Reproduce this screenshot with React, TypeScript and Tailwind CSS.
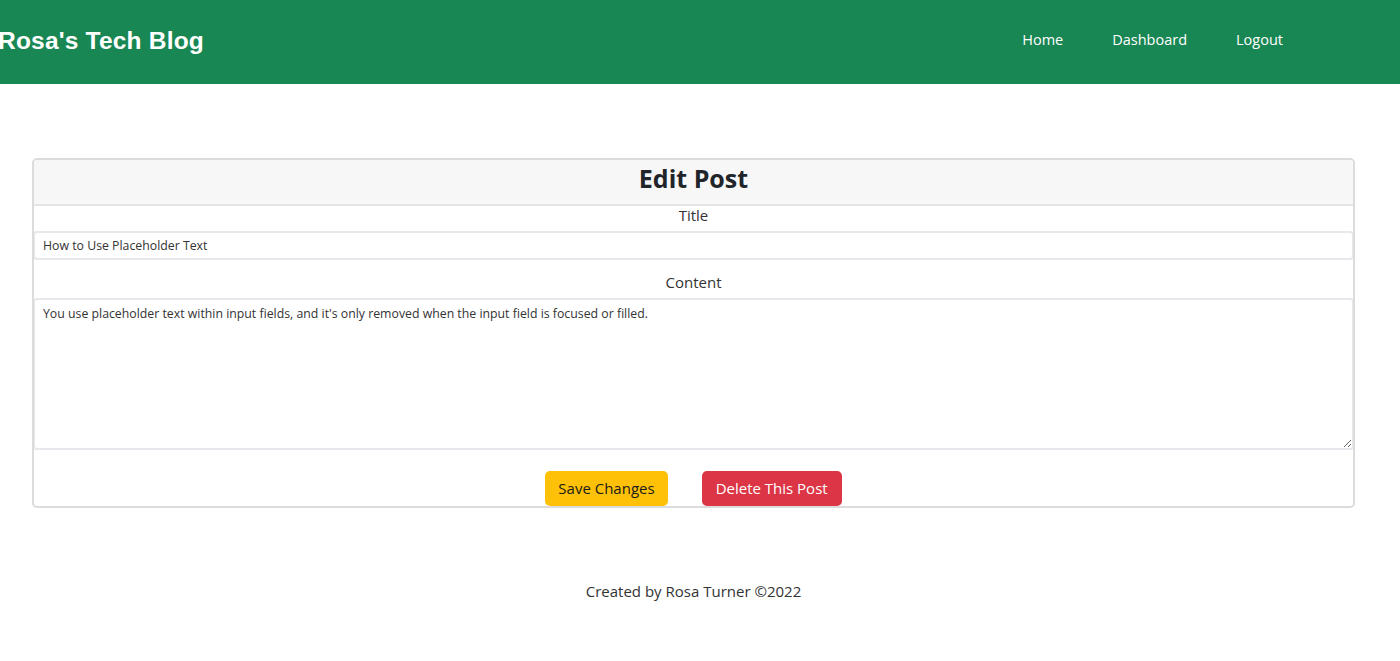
import React from "react";

const body = "font-['Open_Sans',_'DejaVu_Sans',_sans-serif]";

export default function App() {
  return (
    <div className={`min-h-screen w-[1400px] bg-white text-[#212529] ${body}`}>
      <header className="h-[84px] bg-[#198754] flex items-center w-full">
        <h1 className="font-['Liberation_Sans',_sans-serif] font-bold text-[24.5px] text-white -ml-[2px] -mt-[2px] tracking-[0.2px]">
          Rosa's Tech Blog
        </h1>
        <nav className="ml-auto mr-[117px] flex items-center gap-[49px] text-white text-[14.5px] -mt-[5px]">
          <a>Home</a>
          <a>Dashboard</a>
          <a>Logout</a>
        </nav>
      </header>

      <main className="w-[1387px] pt-[74px] px-[32px]">
        <div className="border-2 border-[#dcdcdc] rounded-[5px] overflow-hidden">
          <div className="bg-[#f7f7f7] h-[46px] flex items-center justify-center border-b-2 border-[#e5e5e5]">
            <h2 className="text-[25px] font-bold text-[#212529] -mt-[6px]">Edit Post</h2>
          </div>
          <form className="flex flex-col">
            <label className="text-center text-[15px] text-[#333] leading-[20px] -mt-[1px] h-[26px]">Title</label>
            <input
              defaultValue="How to Use Placeholder Text"
              className="h-[29px] -mx-[1px] border-2 border-[#e8e8ec] rounded-[4px] px-[8px] text-[12.3px] text-[#333] outline-none"
            />
            <label className="text-center text-[15px] text-[#333] leading-[20px] pt-[12px] h-[38px]">Content</label>
            <textarea
              defaultValue="You use placeholder text within input fields, and it's only removed when the input field is focused or filled."
              className="h-[152px] -mx-[1px] border-2 border-[#e8e8ec] rounded-[4px] px-[8px] pt-[5px] text-[12.3px] text-[#333] outline-none resize-y"
            />
            <div className="flex justify-center gap-[34px] pt-[21px]">
              <button type="button" className="h-[35px] px-[13px] rounded-[5px] bg-[#ffc107] text-[#1a1a1a] text-[15px]">
                Save Changes
              </button>
              <button type="button" className="h-[35px] px-[14px] rounded-[5px] bg-[#dc3545] text-white text-[15px]">
                Delete This Post
              </button>
            </div>
          </form>
        </div>
      </main>

      <footer className="w-[1387px] text-center text-[15px] text-[#333] pt-[72px]">
        Created by Rosa Turner ©2022
      </footer>
    </div>
  );
}
